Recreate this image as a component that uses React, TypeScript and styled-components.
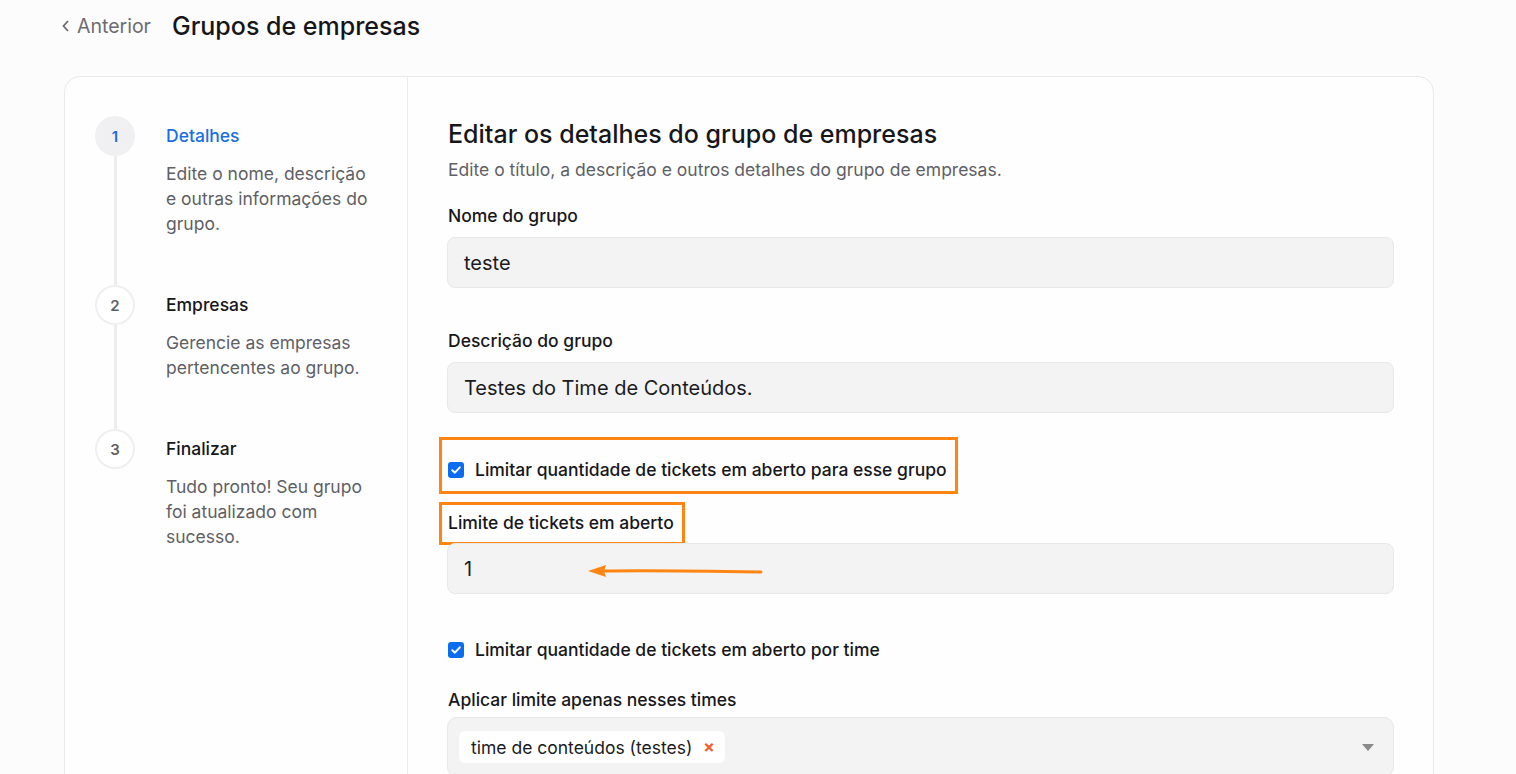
import styled, { createGlobalStyle } from "styled-components";

const GlobalStyle = createGlobalStyle`
  body {
    margin: 0;
    background: #fcfcfc;
    font-family: "Inter", "Noto Sans", sans-serif;
    color: #1c1c1e;
    overflow: hidden;
  }
`;

const steps = [
  {
    n: 1,
    title: "Detalhes",
    text: "Edite o nome, descrição e outras informações do grupo.",
    active: true,
  },
  {
    n: 2,
    title: "Empresas",
    text: "Gerencie as empresas pertencentes ao grupo.",
    active: false,
  },
  {
    n: 3,
    title: "Finalizar",
    text: "Tudo pronto! Seu grupo foi atualizado com sucesso.",
    active: false,
  },
];

const App = () => {
  return (
    <>
      <GlobalStyle />
      <Page>
        <Header>
          <BackLink>
            <svg width="10" height="14" viewBox="0 0 10 14">
              <path d="M7 2 L2.5 7 L7 12" fill="none" stroke="#6b6b72" strokeWidth="1.8" />
            </svg>
            Anterior
          </BackLink>
          <PageTitle>Grupos de empresas</PageTitle>
        </Header>

        <Card>
          <Sidebar>
            {steps.map((s, i) => (
              <Step key={s.n}>
                <Rail>
                  <StepDot $active={s.active}>{s.n}</StepDot>
                  {i < steps.length - 1 && <RailLine />}
                </Rail>
                <StepBody $last={i === steps.length - 1}>
                  <StepTitle $active={s.active}>{s.title}</StepTitle>
                  <StepText>{s.text}</StepText>
                </StepBody>
              </Step>
            ))}
          </Sidebar>

          <Content>
            <Heading>Editar os detalhes do grupo de empresas</Heading>
            <Subheading>Edite o título, a descrição e outros detalhes do grupo de empresas.</Subheading>

            <Label $top={22}>Nome do grupo</Label>
            <Input>teste</Input>

            <Label $top={41}>Descrição do grupo</Label>
            <Input>Testes do Time de Conteúdos.</Input>

            <Highlighted $top={45} $fit>
              <CheckRow>
                <Checkbox />
                Limitar quantidade de tickets em aberto para esse grupo
              </CheckRow>
              <Frame $inset="-21px -11px -12px -8px" />
            </Highlighted>

            <Highlighted $top={29} $fit>
              <Label $top={0}>Limite de tickets em aberto</Label>
              <Frame $inset="-9px -11px -10px -8px" />
            </Highlighted>
            <Highlighted $top={8}>
              <Input>1</Input>
              <Arrow width="176" height="14" viewBox="0 0 176 14">
                <path d="M174 8 C120 7 60 6 14 7" fill="none" stroke="#ff8512" strokeWidth="3" strokeLinecap="round" />
                <path d="M1 7 L19 1 L17 7 L19 13 Z" fill="#ff8512" />
              </Arrow>
            </Highlighted>

            <CheckRow $top={44}>
              <Checkbox />
              Limitar quantidade de tickets em aberto por time
            </CheckRow>

            <Label $top={26}>Aplicar limite apenas nesses times</Label>
            <Select $top={5}>
              <Chip>
                time de conteúdos (testes)
                <ChipRemove>×</ChipRemove>
              </Chip>
              <Caret />
            </Select>
          </Content>
        </Card>
      </Page>
    </>
  );
};

export default App;

const Checkbox = () => (
  <CheckBox>
    <svg width="12" height="12" viewBox="0 0 12 12">
      <path d="M2.3 6.2 L4.9 8.7 L9.8 3.3" fill="none" stroke="#fff" strokeWidth="1.9" strokeLinecap="round" strokeLinejoin="round" />
    </svg>
  </CheckBox>
);

const Page = styled.div`
  width: 1516px;
  height: 774px;
`;

const Header = styled.div`
  display: flex;
  align-items: center;
  height: 52px;
  padding-left: 61px;
  gap: 21px;
`;

const BackLink = styled.a`
  display: flex;
  align-items: center;
  gap: 6px;
  font-size: 19.5px;
  color: #6b6b72;
`;

const PageTitle = styled.h1`
  margin: 0;
  font-size: 25px;
  font-weight: 500;
  color: #16161a;
`;

const Card = styled.div`
  margin: 24px 0 0 64px;
  width: 1370px;
  height: 760px;
  box-sizing: border-box;
  border: 1px solid #e9e9ea;
  border-radius: 16px;
  background: #fefefe;
  display: grid;
  grid-template-columns: 343px 1fr;
`;

const Sidebar = styled.div`
  border-right: 1px solid #ececec;
  padding: 39px 0 0 30px;
`;

const Step = styled.div`
  display: flex;
  gap: 31px;
`;

const Rail = styled.div`
  width: 40px;
  display: flex;
  flex-direction: column;
  align-items: center;
`;

const StepDot = styled.div<{ $active: boolean }>`
  width: 40px;
  height: 40px;
  flex: none;
  box-sizing: border-box;
  border-radius: 50%;
  display: flex;
  align-items: center;
  justify-content: center;
  font-size: 15px;
  font-weight: 600;
  background: ${(p) => (p.$active ? "#f0f0f2" : "#ffffff")};
  border: ${(p) => (p.$active ? "none" : "2px solid #efefef")};
  color: ${(p) => (p.$active ? "#1a6fe0" : "#5f5f66")};
`;

const RailLine = styled.div`
  width: 3px;
  flex: 1;
  background: #ededee;
`;

const StepBody = styled.div<{ $last: boolean }>`
  width: 205px;
  padding-bottom: ${(p) => (p.$last ? 0 : 49)}px;
`;

const StepTitle = styled.div<{ $active: boolean }>`
  height: 40px;
  line-height: 40px;
  font-size: 17.5px;
  font-weight: 500;
  color: ${(p) => (p.$active ? "#1a6fe0" : "#17171b")};
`;

const StepText = styled.div`
  margin-top: 5px;
  font-size: 17.5px;
  line-height: 25px;
  color: #5f5f66;
`;

const Content = styled.div`
  padding: 41px 39px 0 39px;
  display: flex;
  flex-direction: column;
  align-items: stretch;
`;

const Heading = styled.h2`
  margin: 0 0 0 1px;
  font-size: 25px;
  line-height: 32px;
  font-weight: 500;
  color: #17171b;
`;

const Subheading = styled.p`
  margin: 8px 0 0 1px;
  font-size: 17.5px;
  line-height: 24px;
  color: #5f5f66;
`;

const Label = styled.label<{ $top: number }>`
  display: block;
  margin-top: ${(p) => p.$top}px;
  margin-left: 1px;
  font-size: 17.5px;
  line-height: 24px;
  font-weight: 500;
  color: #17171b;
`;

const Input = styled.div`
  margin-top: 9px;
  height: 51px;
  box-sizing: border-box;
  border: 1px solid #e8e8e8;
  border-radius: 8px;
  background: #f3f3f3;
  display: flex;
  align-items: center;
  padding-left: 16px;
  font-size: 20px;
  color: #1b1b1f;
`;

const Highlighted = styled.div<{ $top: number; $fit?: boolean }>`
  position: relative;
  margin-top: ${(p) => p.$top}px;
  align-self: ${(p) => (p.$fit ? "flex-start" : "stretch")};
  display: flex;
  flex-direction: column;
  align-items: flex-start;

  & > ${Input} {
    align-self: stretch;
    margin-top: 0;
  }
`;

const Frame = styled.div<{ $inset: string }>`
  position: absolute;
  inset: ${(p) => p.$inset};
  border: 3px solid #ff8512;
  pointer-events: none;
`;

const Arrow = styled.svg`
  position: absolute;
  left: 140px;
  top: 21px;
`;

const CheckRow = styled.div<{ $top?: number }>`
  display: flex;
  align-items: center;
  gap: 11px;
  margin-top: ${(p) => p.$top ?? 0}px;
  margin-left: 1px;
  font-size: 17.5px;
  line-height: 24px;
  font-weight: 500;
  color: #17171b;
`;

const CheckBox = styled.span`
  width: 16px;
  height: 16px;
  border-radius: 3px;
  background: #0b6cf0;
  display: flex;
  align-items: center;
  justify-content: center;
`;

const Select = styled.div<{ $top: number }>`
  margin-top: ${(p) => p.$top}px;
  height: 60px;
  box-sizing: border-box;
  border: 1px solid #e8e8e8;
  border-radius: 10px;
  background: #f3f3f3;
  display: flex;
  align-items: flex-start;
  justify-content: space-between;
  padding: 13px 19px 0 11px;
`;

const Chip = styled.div`
  height: 32px;
  display: flex;
  align-items: center;
  gap: 11px;
  padding: 0 10px 0 12px;
  border-radius: 6px;
  background: #ffffff;
  font-size: 17.5px;
  color: #1b1b1f;
`;

const ChipRemove = styled.span`
  color: #f0602a;
  font-weight: 700;
  font-size: 17px;
`;

const Caret = styled.span`
  margin-top: 13px;
  width: 0;
  height: 0;
  border-left: 6px solid transparent;
  border-right: 6px solid transparent;
  border-top: 7px solid #8a8a8a;
`;
